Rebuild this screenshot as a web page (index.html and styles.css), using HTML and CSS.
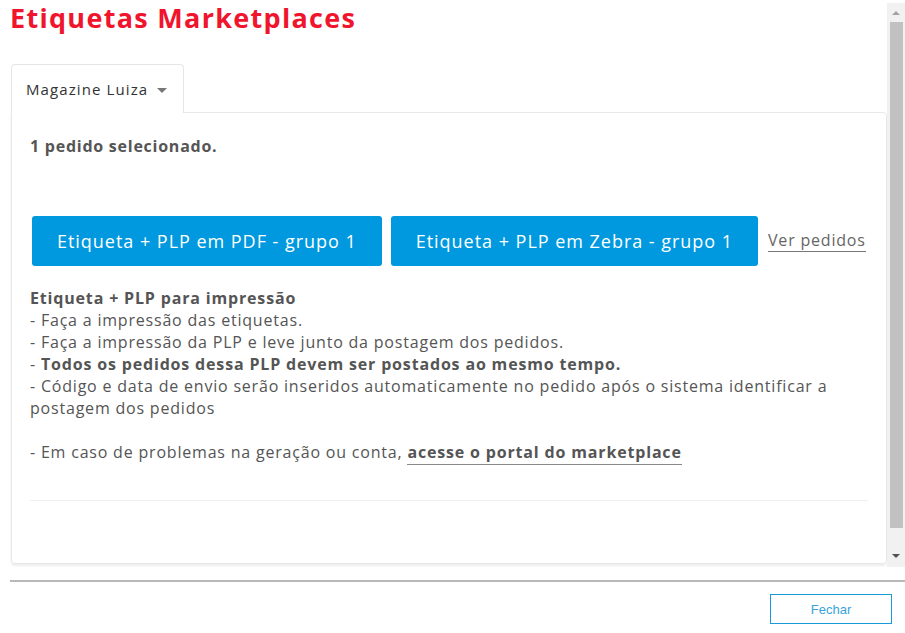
FILE: index.html
```html
<!DOCTYPE html>
<html lang="pt-BR">
<head>
<meta charset="utf-8">
<title>Etiquetas Marketplaces</title>
<link rel="stylesheet" href="styles.css">
</head>
<body>
<div class="modal">
  <div class="scroll-area">
    <div class="content">
      <h1 class="title">Etiquetas Marketplaces</h1>
      <div class="tabs">
        <div class="tab">Magazine Luiza<span class="caret"></span></div>
      </div>
      <div class="panel">
        <p class="selected">1 pedido selecionado.</p>
        <div class="actions">
          <button class="btn-primary">Etiqueta + PLP em PDF - grupo 1</button>
          <button class="btn-primary">Etiqueta + PLP em Zebra - grupo 1</button>
          <a class="link-orders" href="#">Ver pedidos</a>
        </div>
        <div class="info">
          <strong>Etiqueta + PLP para impressão</strong><br>
          - Faça a impressão das etiquetas.<br>
          - Faça a impressão da PLP e leve junto da postagem dos pedidos.<br>
          - <strong>Todos os pedidos dessa PLP devem ser postados ao mesmo tempo.</strong><br>
          - Código e data de envio serão inseridos automaticamente no pedido após o sistema identificar a postagem dos pedidos<br>
          <br>
          - Em caso de problemas na geração ou conta, <a class="link-portal" href="#">acesse o portal do marketplace</a>
        </div>
        <div class="divider"></div>
      </div>
    </div>
    <div class="scrollbar">
      <div class="arrow arrow-up"></div>
      <div class="thumb"></div>
      <div class="arrow arrow-down"></div>
    </div>
  </div>
  <div class="footer">
    <button class="btn-close">Fechar</button>
  </div>
</div>
</body>
</html>
```

FILE: styles.css
```css
* { box-sizing: border-box; }

html, body {
  margin: 0;
  padding: 0;
  background: #fff;
}

body {
  font-family: "Open Sans", "Noto Sans", sans-serif;
  letter-spacing: 0.05em;
  color: #555;
  width: 905px;
  height: 633px;
  overflow: hidden;
}

.scroll-area {
  display: flex;
  height: 567px;
}

.content {
  flex: 1;
  padding-left: 10px;
  overflow: hidden;
}

.title {
  margin: 0;
  font-size: 27px;
  line-height: 36px;
  font-weight: 700;
  letter-spacing: 1.3px;
  color: #f0142d;
}

.tabs {
  display: flex;
  margin-top: 28px;
  padding-left: 1px;
}

.tab {
  position: relative;
  z-index: 1;
  background: #fff;
  border: 1px solid #e6e6e6;
  border-bottom: none;
  border-radius: 4px 4px 0 0;
  margin-bottom: -1px;
  padding: 13px 16px 13px 14px;
  font-size: 15px;
  letter-spacing: 1.1px;
  line-height: 22px;
  color: #333;
  display: flex;
  align-items: center;
}

.caret {
  display: inline-block;
  margin-left: 9px;
  margin-top: 2px;
  width: 0;
  height: 0;
  border-left: 5px solid transparent;
  border-right: 5px solid transparent;
  border-top: 5px solid #777;
}

.panel {
  margin-left: 1px;
  border: 1px solid #e8e8e8;
  border-radius: 0 4px 4px 4px;
  box-shadow: 0 2px 3px rgba(0, 0, 0, 0.08);
  padding: 22px 18px 62px 18px;
}

.selected {
  margin: 0 0 59px 0;
  font-size: 16px;
  line-height: 22px;
  font-weight: 700;
  letter-spacing: 0.047em;
  color: #555;
}

.actions {
  display: flex;
  align-items: center;
  margin-left: 2px;
}

.btn-primary {
  height: 50px;
  padding: 0 25px;
  margin-right: 9px;
  border: none;
  border-radius: 3px;
  background: #0099e0;
  color: #fff;
  font-family: "Open Sans", "Noto Sans", sans-serif;
  font-size: 18px;
  letter-spacing: 0.97px;
  cursor: pointer;
}

.link-orders {
  margin-left: 1px;
  font-size: 16px;
  line-height: 20px;
  letter-spacing: 0.05em;
  color: #666;
  text-decoration: none;
  border-bottom: 1px solid #777;
  padding-bottom: 1px;
}

.info {
  margin-top: 21px;
  font-size: 16px;
  line-height: 22px;
  color: #555;
}

.info strong {
  font-weight: 700;
  letter-spacing: 0.052em;
}

.link-portal {
  font-weight: 700;
  letter-spacing: 0.052em;
  color: #555;
  text-decoration: none;
  border-bottom: 1px solid #888;
  padding-bottom: 1px;
}

.divider {
  margin-top: 37px;
  height: 1px;
  background: #eee;
}

.scrollbar {
  width: 18px;
  margin-top: 3px;
  background: #f1f1f1;
  display: flex;
  flex-direction: column;
  align-items: center;
}

.arrow {
  width: 0;
  height: 0;
  border-left: 4px solid transparent;
  border-right: 4px solid transparent;
}

.arrow-up {
  margin-top: 8px;
  border-bottom: 4px solid #a3a3a3;
}

.arrow-down {
  margin-top: 26px;
  border-top: 4px solid #505050;
}

.thumb {
  margin-top: 7px;
  width: 13px;
  height: 506px;
  background: #c1c1c1;
}

.footer {
  margin-top: 13px;
  margin-left: 10px;
  border-top: 2px solid #b8b8b8;
  padding: 12px 13px 0 0;
  display: flex;
  justify-content: flex-end;
}

.btn-close {
  width: 122px;
  height: 30px;
  background: #fff;
  border: 1px solid #1a9ad8;
  color: #3aa3dc;
  font-family: "Liberation Sans", Arial, sans-serif;
  font-size: 13px;
  letter-spacing: 0;
  cursor: pointer;
}
```
